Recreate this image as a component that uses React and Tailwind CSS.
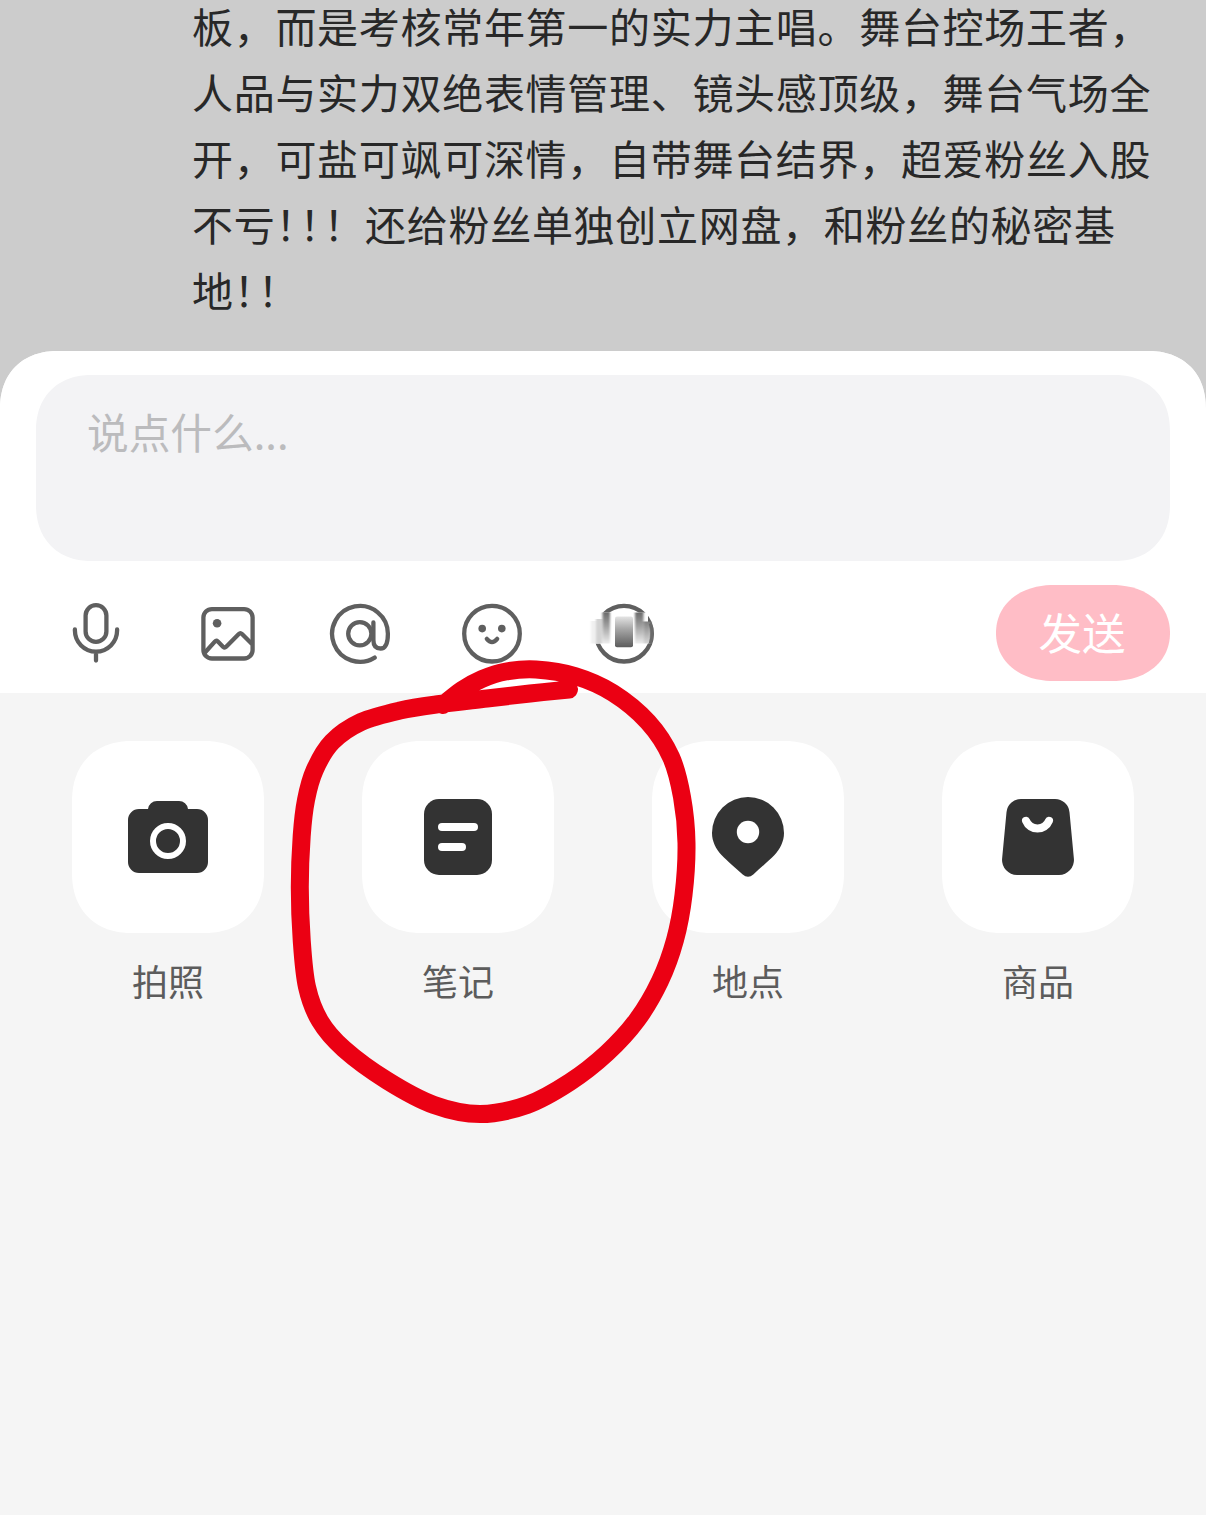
import React from 'react';

const commentLines = [
    ['板，而是考核常年第一的实力主唱。舞台控场王者，'],
    ['人品与实力双绝表情管理、镜头感顶级，舞台气场全'],
    ['开，可盐可飒可深情，自带舞台结界，超爱粉丝入股'],
    ['不亏', '！！', '！还给粉丝单独创立网盘，和粉丝的秘密基'],
    ['地', '！', '！'],
];

const MicIcon = () => (
    <svg className="size-16" viewBox="0 0 64 64" fill="none" stroke="#5f5f5f" strokeWidth="4.3" strokeLinecap="round">
        <rect x="21.6" y="4.2" width="20.8" height="36.6" rx="10.4" />
        <path d="M10.9 28.5v1a21.1 21.1 0 0 0 42.2 0v-1M32 51v8.6" />
    </svg>
);

const ImageIcon = () => (
    <svg className="size-16" viewBox="0 0 64 64" fill="none" stroke="#5f5f5f" strokeWidth="4.3" strokeLinejoin="round">
        <rect x="7.4" y="8.1" width="49.2" height="49.4" rx="8.5" />
        <path d="M9 51.5 18.8 40.6Q20.3 39 21.9 40.5L27.2 45.9Q28.7 47.2 30.2 45.8L42.8 33Q44.4 31.4 46 33L56 43" />
        <circle cx="21.1" cy="22.3" r="4.3" fill="#5f5f5f" stroke="none" />
    </svg>
);

const AtIcon = () => (
    <svg className="size-16" viewBox="0 0 64 64" fill="none" stroke="#5f5f5f" strokeWidth="4.3" strokeLinecap="round">
        <path d="M46.7 56.6A27.9 27.9 0 1 1 59.9 32.7C59.9 42.5 57.5 47.5 52.6 47.5C48 47.5 45.4 44.5 45.4 39V21.5" />
        <circle cx="31.8" cy="32.7" r="11.6" />
    </svg>
);

const SmileIcon = () => (
    <svg className="size-16" viewBox="0 0 64 64" fill="none" stroke="#5f5f5f" strokeWidth="4.3" strokeLinecap="round">
        <circle cx="32" cy="32.7" r="27.8" />
        <circle cx="22.2" cy="27.6" r="3.8" fill="#5f5f5f" stroke="none" />
        <circle cx="41.8" cy="27.6" r="3.8" fill="#5f5f5f" stroke="none" />
        <path d="M26.8 37.9Q32 44.2 37.2 37.9" />
    </svg>
);

const SmearedIcon = () => (
    <svg className="size-16 overflow-visible" viewBox="0 0 64 64" fill="none">
        <defs>
            <linearGradient id="fadeDown" x1="0" y1="0" x2="0" y2="1">
                <stop offset="0" stopColor="#6a6a6a" />
                <stop offset="0.45" stopColor="#a2a2a2" />
                <stop offset="1" stopColor="#ececec" />
            </linearGradient>
            <linearGradient id="fadeUp" x1="0" y1="0" x2="0" y2="1">
                <stop offset="0" stopColor="#e4e4e4" />
                <stop offset="0.4" stopColor="#a8a8a8" />
                <stop offset="1" stopColor="#5c5c5c" />
            </linearGradient>
            <linearGradient id="fadeSide" x1="0" y1="0" x2="0" y2="1">
                <stop offset="0" stopColor="#808080" />
                <stop offset="1" stopColor="#d8d8d8" />
            </linearGradient>
            <filter id="soft" x="-30%" y="-30%" width="160%" height="160%">
                <feGaussianBlur stdDeviation="1.2 0.4" />
            </filter>
            <filter id="faint" x="-30%" y="-30%" width="160%" height="160%">
                <feGaussianBlur stdDeviation="0.6 0.2" />
            </filter>
        </defs>
        <circle cx="32" cy="32.7" r="27.8" stroke="#5f5f5f" strokeWidth="4.3" />
        <path d="M-2 11.5H56V42.5H-2Z" fill="#fff" />
        <g filter="url(#soft)">
            <rect x="-1" y="20" width="8" height="22.5" fill="#f0f0f0" />
            <rect x="4" y="18" width="6" height="24.5" fill="#d2d2d2" />
            <rect x="10.5" y="11.5" width="7.5" height="31" fill="url(#fadeDown)" />
            <rect x="43" y="11.5" width="8.5" height="31" fill="url(#fadeDown)" />
            <rect x="51.5" y="20.5" width="7" height="22" fill="url(#fadeSide)" />
        </g>
        <rect x="23" y="15.5" width="18" height="30.7" rx="2" fill="url(#fadeUp)" filter="url(#faint)" />
        <path d="M58.3 22.5A27.8 27.8 0 0 1 58.2 42.5" stroke="#6a6a6a" strokeWidth="3" />
    </svg>
);

const CameraIcon = () => (
    <svg className="size-24" viewBox="0 0 96 96" fill="#333">
        <path d="M37 12h22a9 9 0 0 1 9 8h9a11 11 0 0 1 11 11v42a11 11 0 0 1-11 11H19A11 11 0 0 1 8 73V31a11 11 0 0 1 11-11h9a9 9 0 0 1 9-8Z" />
        <circle cx="48" cy="52" r="15" stroke="#fff" strokeWidth="6" />
    </svg>
);

const NoteIcon = () => (
    <svg className="size-24" viewBox="0 0 96 96" fill="#333">
        <rect x="14" y="10" width="68" height="76" rx="15" />
        <rect x="28" y="34" width="40" height="8" rx="4" fill="#fff" />
        <rect x="28" y="54" width="28" height="8" rx="4" fill="#fff" />
    </svg>
);

const PinIcon = () => (
    <svg className="size-24" viewBox="0 0 96 96" fill="#333">
        <path d="M48 8a36 36 0 0 1 36 36c0 8.5-4 16-9.500 22C69 71.7 60.5 78.8 53.3 85.6Q48 90 42.7 85.6C35.5 78.8 27 71.7 21.5 66C16 60 12 52.5 12 44A36 36 0 0 1 48 8Z" />
        <circle cx="48" cy="43" r="11.2" fill="#fff" />
    </svg>
);

const BagIcon = () => (
    <svg className="size-24" viewBox="0 0 96 96" fill="#333">
        <path d="M31 10h34a14.5 14.5 0 0 1 14.5 13.2l4.4 46.5A15 15 0 0 1 69 86H27A15 15 0 0 1 12.1 69.7l4.4-46.5A14.5 14.5 0 0 1 31 10Z" />
        <path d="M36 31.8C40 42 55 42 59 31.8" fill="none" stroke="#fff" strokeWidth="8" strokeLinecap="round" />
    </svg>
);

const actions = [
    { label: '拍照', Icon: CameraIcon },
    { label: '笔记', Icon: NoteIcon },
    { label: '地点', Icon: PinIcon },
    { label: '商品', Icon: BagIcon },
];

// hand drawn marker stroke, in page coordinates
const strokePoints = [
    [443, 705], [462, 690], [482, 679], [506, 671.5], [536, 669.5], [575, 676], [613, 693], [648, 722], [671, 757],
    [682, 797], [686.5, 843], [683.5, 895], [675, 940], [660, 981], [637, 1020], [607, 1053], [570, 1082],
    [527, 1105], [480, 1114], [434, 1105], [387, 1080.5], [344, 1049], [320, 1021], [307, 987], [301.7, 940],
    [299.8, 887], [301.7, 836], [306, 800], [314.7, 770], [332, 742], [361, 722], [400, 710.5],
    [440, 704], [487, 698.5], [530, 693.5], [569, 689.5],
];

const toSmoothPath = (pts) => {
    let d = `M${pts[0][0]} ${pts[0][1]}`;
    for (let i = 0; i < pts.length - 1; i++) {
        const p0 = pts[i - 1] || pts[i];
        const p1 = pts[i];
        const p2 = pts[i + 1];
        const p3 = pts[i + 2] || p2;
        d += `C${p1[0] + (p2[0] - p0[0]) / 6} ${p1[1] + (p2[1] - p0[1]) / 6} ${p2[0] - (p3[0] - p1[0]) / 6} ${p2[1] - (p3[1] - p1[1]) / 6} ${p2[0]} ${p2[1]}`;
    }
    return d;
};

const App = () => {
    return (
        <div className="relative flex h-[1515px] w-[1206px] flex-col overflow-hidden bg-[#cccccc] font-['Noto_Sans_CJK_SC',sans-serif]">
            <div className="h-[351px] shrink-0 pl-[192px]">
                <div className="-mt-[8px] text-[41px] leading-[66px] tracking-[0.7px] text-[#282828]">
                    {commentLines.map(([start, tight, rest], i) => (
                        <p key={i} className="whitespace-nowrap">
                            {start}
                            {tight && <span className="tracking-[-17px]">{tight}</span>}
                            {rest}
                        </p>
                    ))}
                </div>
            </div>

            <div className="flex grow flex-col overflow-hidden rounded-t-[58px] bg-[#f5f5f5] [corner-shape:superellipse(1.15)]">
                <div className="bg-white px-9 pt-6 pb-3">
                    <div className="h-[186px] rounded-[56px] bg-[#f3f3f5] px-[51px] pt-[26px] text-[41.7px] leading-[60px] text-[#bbbbbd] [corner-shape:superellipse(1.15)]">
                        说点什么...
                    </div>
                    <div className="mt-6 flex h-24 items-center justify-between pl-7">
                        <div className="flex gap-[68px]">
                            <MicIcon />
                            <ImageIcon />
                            <AtIcon />
                            <SmileIcon />
                            <SmearedIcon />
                        </div>
                        <button className="h-24 w-[174px] rounded-[58px/48px] bg-[#ffbdc6] pr-0.5 pb-0.5 text-[43.5px] leading-none text-white [corner-shape:superellipse(1.1)]">
                            发送
                        </button>
                    </div>
                </div>

                <div className="flex justify-between px-[72px] pt-12">
                    {actions.map(({ label, Icon }) => (
                        <div key={label} className="flex flex-col items-center">
                            <div className="flex size-48 items-center justify-center rounded-[60px] bg-white [corner-shape:superellipse(1.15)]">
                                <Icon />
                            </div>
                            <span className="mt-[21px] text-[36px] leading-[52px] text-[#5c5c5c]">{label}</span>
                        </div>
                    ))}
                </div>
            </div>

            <svg className="pointer-events-none absolute inset-0" width="1206" height="1515" fill="none">
                <path d={toSmoothPath(strokePoints)} stroke="#eb0013" strokeWidth="18" strokeLinecap="round" strokeLinejoin="round" />
            </svg>
        </div>
    );
};

export default App;
